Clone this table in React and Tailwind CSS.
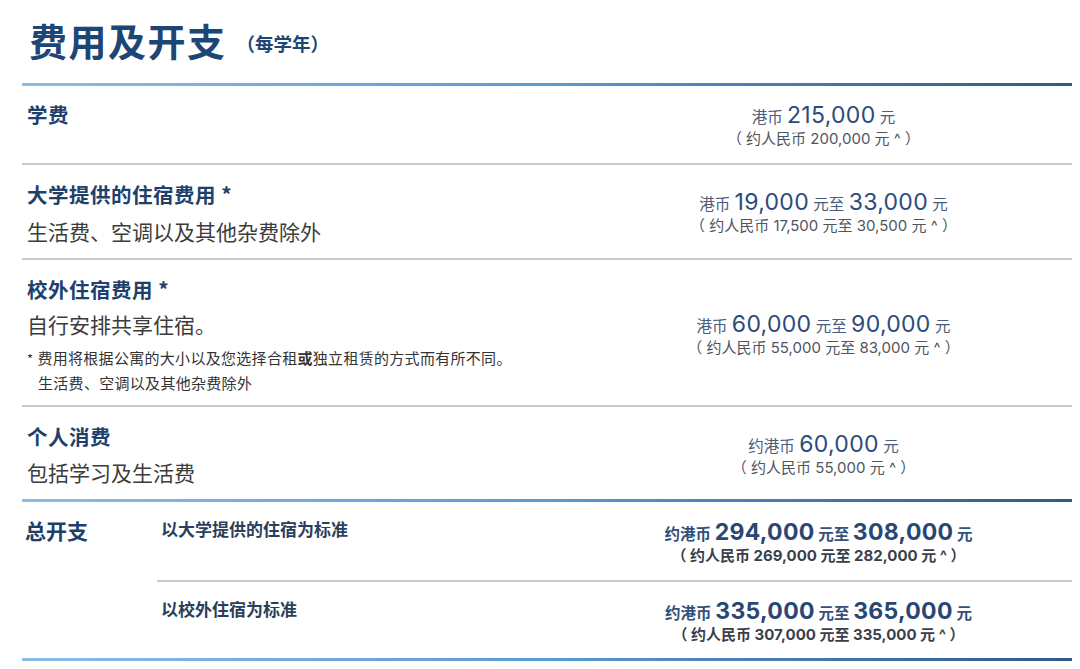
const cjk = "font-['Noto_Sans_CJK_SC','Noto_Sans',sans-serif]";
const num = "font-['Inter','Noto_Sans_CJK_SC',sans-serif]";

function BlueRule() {
  return <div className="h-[3px] w-full bg-gradient-to-r from-[#8cbde8] via-[#5b9ad3] to-[#2f5a88]" />;
}

function GrayRule({ className = "" }) {
  return <div className={`h-[2px] bg-[#c9c9c9] ${className}`} />;
}

function Amount({ prefix, from, to, rmbFrom, rmbTo, bold = false }) {
  const unit = bold ? "font-bold text-[#34507a]" : "text-[#4b5d7d]";
  const big = bold ? "font-bold text-[#2a4674]" : "text-[#2d4a7c]";
  return (
    <div className={`${num} text-center`}>
      <div className="h-[26px] leading-[26px] whitespace-nowrap">
        <span className={`text-[15.5px] ${unit}`}>{prefix} </span>
        <span className={`text-[23px] tracking-[0.3px] ${big}`}>{from}</span>
        {to ? (
          <>
            <span className={`text-[15.5px] ${unit}`}> 元至 </span>
            <span className={`text-[23px] tracking-[0.3px] ${big}`}>{to}</span>
          </>
        ) : null}
        <span className={`text-[15.5px] ${unit}`}> 元</span>
      </div>
      <div
        className={`h-[22px] leading-[22px] whitespace-nowrap text-[15px] ${
          bold ? "font-bold text-[#3a3f4a]" : "text-[#505560]"
        }`}
      >
        （ 约人民币 {rmbFrom} 元{rmbTo ? <>至 {rmbTo} 元</> : null} ^ ）
      </div>
    </div>
  );
}

function Row({ children, amount, pt, height }) {
  return (
    <div className={`grid grid-cols-[553px_1fr] ${height}`}>
      <div className="pl-[5px]">{children}</div>
      <div className={pt}>{amount}</div>
    </div>
  );
}

const label = "text-[20.5px] font-bold leading-[24px] text-[#20406b] tracking-[0.5px]";
const sub = "text-[21px] leading-[28px] text-[#3c3c3c]";

export default function App() {
  return (
    <div className={`${cjk} w-[1080px] h-[669px] bg-white pl-[22px] pr-[8px]`}>
      <div className="h-[83px] flex items-center pl-[7px] pb-[4px]">
        <span className="text-[38px] font-bold text-[#1d4675] tracking-[1.5px]">费用及开支</span>
        <span className="ml-[10px] mt-[8px] text-[18.5px] font-semibold text-[#1d4675]">（每学年）</span>
      </div>
      <BlueRule />

      <Row height="h-[77px]" pt="pt-[16px]" amount={<Amount prefix="港币" from="215,000" rmbFrom="200,000" />}>
        <div className={`pt-[16px] ${label}`}>学费</div>
      </Row>
      <GrayRule />

      <Row
        height="h-[93px]"
        pt="pt-[24px]"
        amount={<Amount prefix="港币" from="19,000" to="33,000" rmbFrom="17,500" rmbTo="30,500" />}
      >
        <div className={`pt-[17px] ${label}`}>大学提供的住宿费用 *</div>
        <div className={`mt-[11px] ${sub}`}>生活费、空调以及其他杂费除外</div>
      </Row>
      <GrayRule />

      <Row
        height="h-[145px]"
        pt="pt-[51px]"
        amount={<Amount prefix="港币" from="60,000" to="90,000" rmbFrom="55,000" rmbTo="83,000" />}
      >
        <div className={`pt-[17px] ${label}`}>校外住宿费用 *</div>
        <div className={`mt-[9px] ${sub}`}>自行安排共享住宿。</div>
        <div className="mt-[8px] text-[15px] tracking-[0.3px] leading-[24px] text-[#333]">
          <div className="whitespace-nowrap">
            <span className="mr-[4px] text-[13px]">*</span>费用将根据公寓的大小以及您选择合租
            <span className="font-bold">或</span>独立租赁的方式而有所不同。
          </div>
          <div className="pl-[11px]">生活费、空调以及其他杂费除外</div>
        </div>
      </Row>
      <GrayRule />

      <Row height="h-[92px]" pt="pt-[24px]" amount={<Amount prefix="约港币" from="60,000" rmbFrom="55,000" />}>
        <div className={`pt-[17px] ${label}`}>个人消费</div>
        <div className={`mt-[10px] ${sub}`}>包括学习及生活费</div>
      </Row>
      <BlueRule />

      <div className="grid grid-cols-[135px_1fr]">
        <div className="pl-[3px] pt-[14px] text-[21px] font-bold leading-[28px] text-[#1d3f6b]">总开支</div>
        <div>
          <div className="grid grid-cols-[408px_1fr] h-[78px]">
            <div className="pl-[4px] pt-[16px] text-[17px] font-bold leading-[22px] text-[#2b3f5c]">
              以大学提供的住宿为标准
            </div>
            <div className="pt-[17px]">
              <Amount bold prefix="约港币" from="294,000" to="308,000" rmbFrom="269,000" rmbTo="282,000" />
            </div>
          </div>
          <GrayRule />
          <div className="grid grid-cols-[408px_1fr] h-[76px]">
            <div className="pl-[4px] pt-[16px] text-[17px] font-bold leading-[22px] text-[#2b3f5c]">
              以校外住宿为标准
            </div>
            <div className="pt-[16px]">
              <Amount bold prefix="约港币" from="335,000" to="365,000" rmbFrom="307,000" rmbTo="335,000" />
            </div>
          </div>
        </div>
      </div>
      <BlueRule />
    </div>
  );
}
